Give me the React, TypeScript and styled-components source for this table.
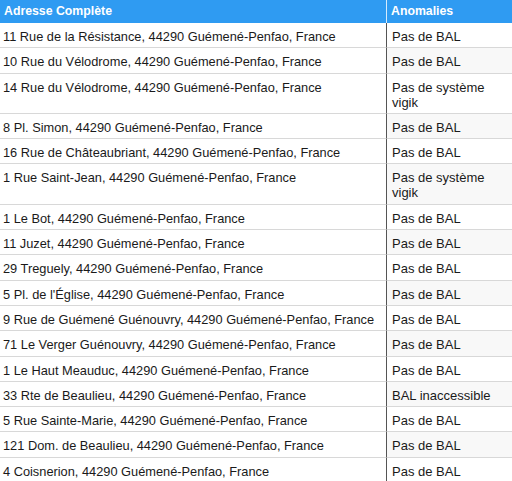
import styled, { createGlobalStyle } from "styled-components";

const GlobalStyle = createGlobalStyle`
  html, body {
    margin: 0;
    padding: 0;
    background: #ffffff;
  }
  body {
    font-family: "Liberation Sans", Arial, Helvetica, sans-serif;
    overflow: hidden;
  }
`;

const Table = styled.div`
  width: 512px;
  display: grid;
  grid-template-columns: 386px 1fr;
  font-size: 12.8px;
  color: #1a1a1a;
`;

const HeadCell = styled.div<{ last?: boolean }>`
  height: 23px;
  box-sizing: border-box;
  background: #2f9bf2;
  color: #ffffff;
  font-weight: 700;
  font-size: 12.3px;
  line-height: 23px;
  padding: 0 4px;
  border-left: ${(p) => (p.last ? "1px solid #d6ebfc" : "none")};
`;

const Cell = styled.div<{ last?: boolean; shade?: boolean }>`
  box-sizing: border-box;
  padding: 6px 4px 3.3px 3px;
  line-height: 15px;
  border-bottom: 1px solid #d8d8d8;
  border-left: ${(p) => (p.last ? "1px solid #555555" : "none")};
  padding-left: ${(p) => (p.last ? "5px" : "3px")};
  background: ${(p) => (p.shade ? "#f8f8f8" : "#ffffff")};
  font-size: ${(p) => (p.last ? "13px" : "12.8px")};
  white-space: ${(p) => (p.last ? "normal" : "nowrap")};
`;

const rows: [string, string][] = [
  ["11 Rue de la Résistance, 44290 Guémené-Penfao, France", "Pas de BAL"],
  ["10 Rue du Vélodrome, 44290 Guémené-Penfao, France", "Pas de BAL"],
  ["14 Rue du Vélodrome, 44290 Guémené-Penfao, France", "Pas de système vigik"],
  ["8 Pl. Simon, 44290 Guémené-Penfao, France", "Pas de BAL"],
  ["16 Rue de Châteaubriant, 44290 Guémené-Penfao, France", "Pas de BAL"],
  ["1 Rue Saint-Jean, 44290 Guémené-Penfao, France", "Pas de système vigik"],
  ["1 Le Bot, 44290 Guémené-Penfao, France", "Pas de BAL"],
  ["11 Juzet, 44290 Guémené-Penfao, France", "Pas de BAL"],
  ["29 Treguely, 44290 Guémené-Penfao, France", "Pas de BAL"],
  ["5 Pl. de l'Église, 44290 Guémené-Penfao, France", "Pas de BAL"],
  ["9 Rue de Guémené Guénouvry, 44290 Guémené-Penfao, France", "Pas de BAL"],
  ["71 Le Verger Guénouvry, 44290 Guémené-Penfao, France", "Pas de BAL"],
  ["1 Le Haut Meauduc, 44290 Guémené-Penfao, France", "Pas de BAL"],
  ["33 Rte de Beaulieu, 44290 Guémené-Penfao, France", "BAL inaccessible"],
  ["5 Rue Sainte-Marie, 44290 Guémené-Penfao, France", "Pas de BAL"],
  ["121 Dom. de Beaulieu, 44290 Guémené-Penfao, France", "Pas de BAL"],
  ["4 Coisnerion, 44290 Guémené-Penfao, France", "Pas de BAL"],
];

export default function App() {
  return (
    <>
      <GlobalStyle />
      <Table>
        <HeadCell>Adresse Complète</HeadCell>
        <HeadCell last>Anomalies</HeadCell>
        {rows.map(([addr, anomaly], i) => (
          <>
            <Cell key={`a${i}`}>{addr}</Cell>
            <Cell key={`b${i}`} last shade={i % 2 === 1}>
              {anomaly}
            </Cell>
          </>
        ))}
      </Table>
    </>
  );
}
